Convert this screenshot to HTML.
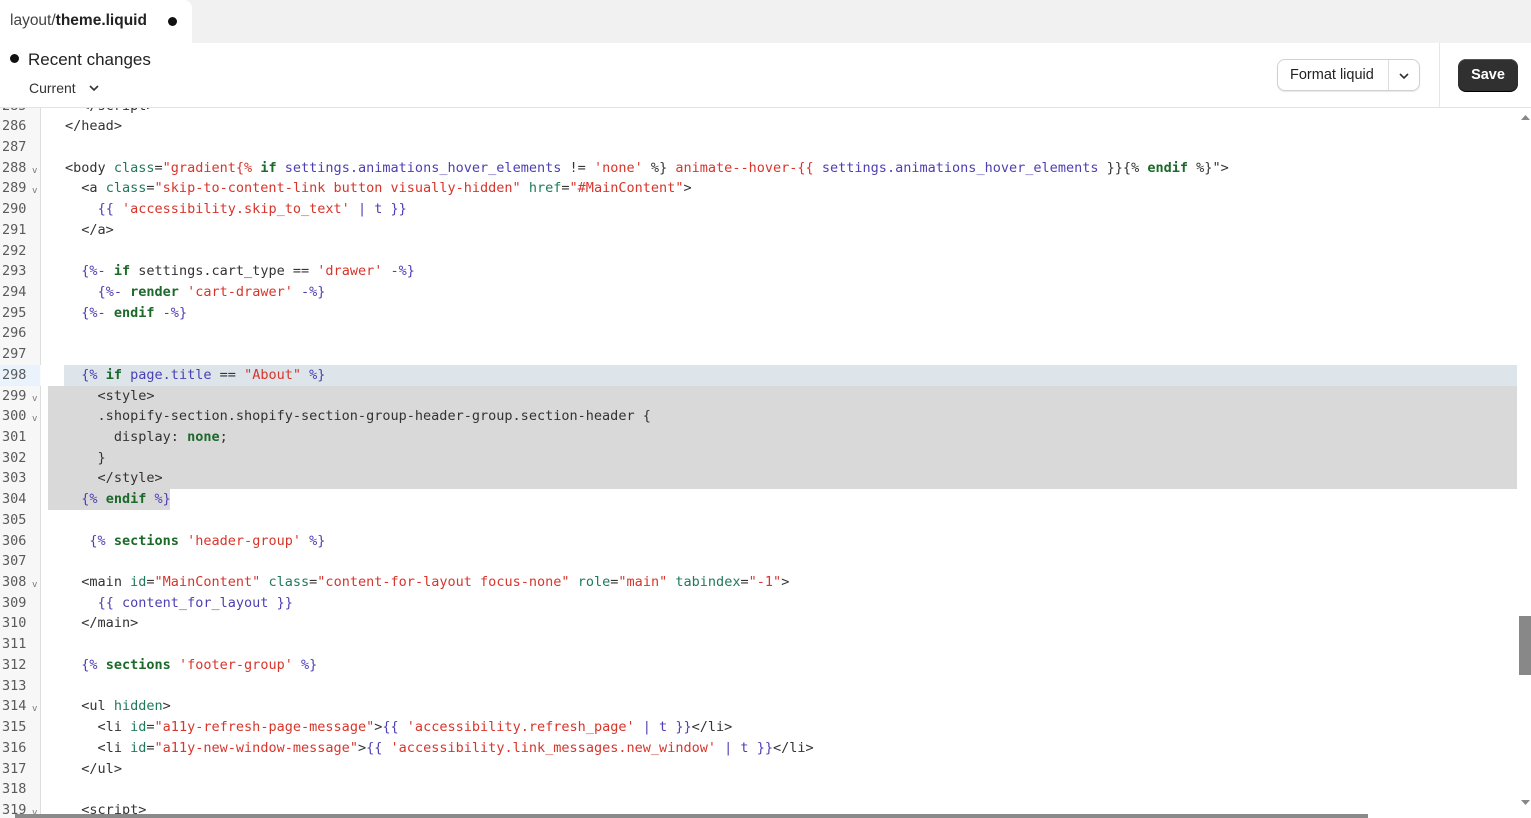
<!DOCTYPE html>
<html><head><meta charset="utf-8"><style>
*{margin:0;padding:0;box-sizing:border-box}
body{width:1531px;height:818px;overflow:hidden;background:#fff;font-family:"Liberation Sans",Arial,sans-serif;position:relative}
.tabbar{position:absolute;left:0;top:0;width:1531px;height:43px;background:#f1f1f1}
.tab{position:absolute;left:0;top:0;width:192px;height:43px;background:#fff;border-radius:0 8px 0 0}
.tab .t{position:absolute;left:10px;top:12px;font-size:15.5px;color:#444}
.tab .t b{color:#222;font-weight:600}
.tab .dot{position:absolute;left:168px;top:17px;width:9px;height:9px;border-radius:50%;background:#111}
.hdr{position:absolute;left:0;top:43px;width:1531px;height:65px;border-bottom:1px solid #e3e3e3;background:#fff}
.rc{position:absolute;left:10px;top:7px;font-size:17px;color:#222}
.rc i{display:inline-block;width:9px;height:9px;border-radius:50%;background:#111;margin-right:9px;vertical-align:2px}
.cur{position:absolute;left:29px;top:37px;font-size:14px;color:#333}
.vsep{position:absolute;left:1439px;top:0;width:1px;height:64px;background:#e6e6e6}
.fmt{position:absolute;left:1277px;top:16px;width:143px;height:32px;border:1px solid #d0d0d0;border-radius:8px;box-shadow:0 1px 1px rgba(0,0,0,.1)}
.fmt span{position:absolute;left:12px;top:7px;font-size:14.5px;color:#222}
.fmt .s{position:absolute;left:110px;top:0;width:1px;height:30px;background:#ddd}
.save{position:absolute;left:1458px;top:16px;width:60px;height:32px;background:#303030;border-radius:8px;color:#fff;font-weight:bold;font-size:14.5px;text-align:center;line-height:32px;box-shadow:0 1px 0 #000,inset 0 1px 0 #555}
.code{position:absolute;left:0;top:108px;width:1531px;height:710px;overflow:hidden}
.gut{position:absolute;left:0;top:0;width:41px;height:710px;background:#f7f7f7;border-right:1px solid #ddd}
.lines{position:absolute;left:0;top:-12.5px;width:1517px}
.ln{height:20.72px;line-height:20.72px;position:relative;font-family:"DejaVu Sans Mono","Liberation Mono",monospace;font-size:13.52px;white-space:pre;color:#333}
.ln .n{position:absolute;left:2px;top:0;color:#5a5a5a;font-size:13.5px}
.ln .f{position:absolute;left:32px;top:3px;color:#777;font-size:9px}
.ln .c{position:absolute;left:65px;top:0}
.a{color:#1f7a5c}.s1{color:#d8352b}.p{color:#4d3fb3}.k{color:#1b6a2a;font-weight:bold}
.hl{position:absolute;top:0;height:20.72px}
.vs{position:absolute;left:1519px;top:108px;width:12px;height:710px}
.hs{position:absolute;left:15px;top:814px;width:1353px;height:4px;background:#8a8a8a}
</style></head><body>
<div class="tabbar"><div class="tab"><div class="t">layout/<b>theme.liquid</b></div><div class="dot"></div></div></div>
<div class="hdr">
<div class="rc"><i></i>Recent changes</div>
<div class="cur">Current <svg width="12" height="10" viewBox="0 0 12 10" style="margin-left:8px"><path d="M2 3l4 4 4-4" fill="none" stroke="#333" stroke-width="1.6"/></svg></div>
<div class="fmt"><span>Format liquid</span><div class="s"></div><svg style="position:absolute;left:120px;top:11px" width="12" height="10" viewBox="0 0 12 10"><path d="M2 3l4 4 4-4" fill="none" stroke="#333" stroke-width="1.6"/></svg></div>
<div class="vsep"></div>
<div class="save">Save</div>
</div>
<div class="code">
<div class="gut"></div>
<div class="lines">
<div class="ln"><span class="n">285</span><span class="c">  &lt;/script&gt;</span></div>
<div class="ln"><span class="n">286</span><span class="c">&lt;/head&gt;</span></div>
<div class="ln"><span class="n">287</span></div>
<div class="ln"><span class="n">288</span><span class="f">v</span><span class="c">&lt;body <span class="a">class</span>=<span class="s1">"gradient{% </span><span class="k">if</span> <span class="p">settings.animations_hover_elements</span> != <span class="s1">'none'</span> %} <span class="s1">animate--hover-{{</span> <span class="p">settings.animations_hover_elements</span> }}{% <span class="k">endif</span> %}"&gt;</span></div>
<div class="ln"><span class="n">289</span><span class="f">v</span><span class="c">  &lt;a <span class="a">class</span>=<span class="s1">"skip-to-content-link button visually-hidden"</span> <span class="a">href</span>=<span class="s1">"#MainContent"</span>&gt;</span></div>
<div class="ln"><span class="n">290</span><span class="c">    <span class="p">{{</span> <span class="s1">'accessibility.skip_to_text'</span> <span class="p">| t }}</span></span></div>
<div class="ln"><span class="n">291</span><span class="c">  &lt;/a&gt;</span></div>
<div class="ln"><span class="n">292</span></div>
<div class="ln"><span class="n">293</span><span class="c">  <span class="p">{%-</span> <span class="k">if</span> settings.cart_type == <span class="s1">'drawer'</span> <span class="p">-%}</span></span></div>
<div class="ln"><span class="n">294</span><span class="c">    <span class="p">{%-</span> <span class="k">render</span> <span class="s1">'cart-drawer'</span> <span class="p">-%}</span></span></div>
<div class="ln"><span class="n">295</span><span class="c">  <span class="p">{%-</span> <span class="k">endif</span> <span class="p">-%}</span></span></div>
<div class="ln"><span class="n">296</span></div>
<div class="ln"><span class="n">297</span></div>
<div class="ln" style="background:linear-gradient(to right,#f7f7f7 0,#f7f7f7 40px,#fff 41px,#fff 64px,#dde4ea 64px)"><span class="n" style="background:#eaf2fc;width:40px;left:0;padding-left:2px">298</span><span class="c">  <span class="p">{%</span> <span class="k">if</span> <span class="p">page.title</span> == <span class="s1">"About"</span> <span class="p">%}</span></span></div>
<div class="ln"><div class="hl" style="left:48px;width:1469px;background:#d9d9d9"></div><span class="n">299</span><span class="f">v</span><span class="c">    &lt;style&gt;</span></div>
<div class="ln"><div class="hl" style="left:48px;width:1469px;background:#d9d9d9"></div><span class="n">300</span><span class="f">v</span><span class="c">    .shopify-section.shopify-section-group-header-group.section-header {</span></div>
<div class="ln"><div class="hl" style="left:48px;width:1469px;background:#d9d9d9"></div><span class="n">301</span><span class="c">      display: <span class="k">none</span>;</span></div>
<div class="ln"><div class="hl" style="left:48px;width:1469px;background:#d9d9d9"></div><span class="n">302</span><span class="c">    }</span></div>
<div class="ln"><div class="hl" style="left:48px;width:1469px;background:#d9d9d9"></div><span class="n">303</span><span class="c">    &lt;/style&gt;</span></div>
<div class="ln"><div class="hl" style="left:48px;width:122px;background:#d9d9d9"></div><span class="n">304</span><span class="c">  <span class="p">{%</span> <span class="k">endif</span> <span class="p">%}</span></span></div>
<div class="ln"><span class="n">305</span></div>
<div class="ln"><span class="n">306</span><span class="c">   <span class="p">{%</span> <span class="k">sections</span> <span class="s1">'header-group'</span> <span class="p">%}</span></span></div>
<div class="ln"><span class="n">307</span></div>
<div class="ln"><span class="n">308</span><span class="f">v</span><span class="c">  &lt;main <span class="a">id</span>=<span class="s1">"MainContent"</span> <span class="a">class</span>=<span class="s1">"content-for-layout focus-none"</span> <span class="a">role</span>=<span class="s1">"main"</span> <span class="a">tabindex</span>=<span class="s1">"-1"</span>&gt;</span></div>
<div class="ln"><span class="n">309</span><span class="c">    <span class="p">{{ content_for_layout }}</span></span></div>
<div class="ln"><span class="n">310</span><span class="c">  &lt;/main&gt;</span></div>
<div class="ln"><span class="n">311</span></div>
<div class="ln"><span class="n">312</span><span class="c">  <span class="p">{%</span> <span class="k">sections</span> <span class="s1">'footer-group'</span> <span class="p">%}</span></span></div>
<div class="ln"><span class="n">313</span></div>
<div class="ln"><span class="n">314</span><span class="f">v</span><span class="c">  &lt;ul <span class="a">hidden</span>&gt;</span></div>
<div class="ln"><span class="n">315</span><span class="c">    &lt;li <span class="a">id</span>=<span class="s1">"a11y-refresh-page-message"</span>&gt;<span class="p">{{</span> <span class="s1">'accessibility.refresh_page'</span> <span class="p">| t }}</span>&lt;/li&gt;</span></div>
<div class="ln"><span class="n">316</span><span class="c">    &lt;li <span class="a">id</span>=<span class="s1">"a11y-new-window-message"</span>&gt;<span class="p">{{</span> <span class="s1">'accessibility.link_messages.new_window'</span> <span class="p">| t }}</span>&lt;/li&gt;</span></div>
<div class="ln"><span class="n">317</span><span class="c">  &lt;/ul&gt;</span></div>
<div class="ln"><span class="n">318</span></div>
<div class="ln"><span class="n">319</span><span class="f">v</span><span class="c">  &lt;script&gt;</span></div>
</div>
</div>
<div class="vs">
<svg style="position:absolute;left:2px;top:6px" width="9" height="6"><path d="M0 6L4.5 1 9 6z" fill="#888"/></svg>
<div style="position:absolute;left:0;top:508px;width:12px;height:59px;background:#888"></div>
<svg style="position:absolute;left:2px;top:692px" width="9" height="6"><path d="M0 0L4.5 5 9 0z" fill="#888"/></svg>
</div>
<div class="hs"></div>
</body></html>
